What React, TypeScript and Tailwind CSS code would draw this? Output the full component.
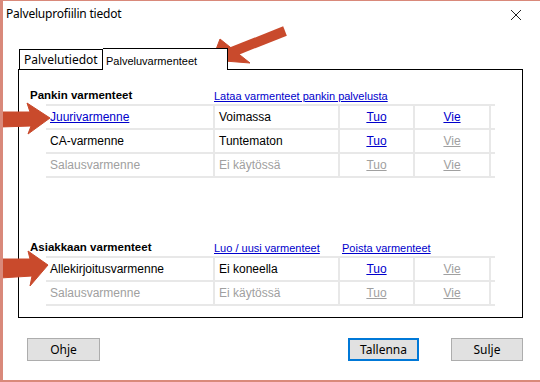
import React from 'react';

type Cell = { text: string; kind: 'link' | 'text' | 'muted' | 'mutedLink' };

interface CertRow {
  name: Cell;
  status: Cell;
  tuo: Cell;
  vie: Cell;
}

const bankRows: CertRow[] = [
  {
    name: { text: 'Juurivarmenne', kind: 'link' },
    status: { text: 'Voimassa', kind: 'text' },
    tuo: { text: 'Tuo', kind: 'link' },
    vie: { text: 'Vie', kind: 'link' },
  },
  {
    name: { text: 'CA-varmenne', kind: 'text' },
    status: { text: 'Tuntematon', kind: 'text' },
    tuo: { text: 'Tuo', kind: 'link' },
    vie: { text: 'Vie', kind: 'mutedLink' },
  },
  {
    name: { text: 'Salausvarmenne', kind: 'muted' },
    status: { text: 'Ei käytössä', kind: 'muted' },
    tuo: { text: 'Tuo', kind: 'mutedLink' },
    vie: { text: 'Vie', kind: 'mutedLink' },
  },
];

const customerRows: CertRow[] = [
  {
    name: { text: 'Allekirjoitusvarmenne', kind: 'text' },
    status: { text: 'Ei koneella', kind: 'text' },
    tuo: { text: 'Tuo', kind: 'link' },
    vie: { text: 'Vie', kind: 'mutedLink' },
  },
  {
    name: { text: 'Salausvarmenne', kind: 'muted' },
    status: { text: 'Ei käytössä', kind: 'muted' },
    tuo: { text: 'Tuo', kind: 'mutedLink' },
    vie: { text: 'Vie', kind: 'mutedLink' },
  },
];

const cellText = (c: Cell) => {
  if (c.kind === 'link') return <span className="text-[#0000cc] underline">{c.text}</span>;
  if (c.kind === 'mutedLink') return <span className="text-[#a0a0a0] underline">{c.text}</span>;
  if (c.kind === 'muted') return <span className="text-[#a0a0a0]">{c.text}</span>;
  return <span className="text-black">{c.text}</span>;
};

const CertTable: React.FC<{ rows: CertRow[] }> = ({ rows }) => (
  <div className="ml-[27px] w-[449px] border-b-2 border-[#e8e8e8]">
    {rows.map((r, i) => (
      <div key={i} className="flex h-[24px] border-t-2 border-[#e8e8e8] text-[12px]">
        <div className="w-[167px] pl-[4px] flex items-center">{cellText(r.name)}</div>
        <div className="w-[125px] pl-[4px] flex items-center border-l-2 border-[#e8e8e8]">{cellText(r.status)}</div>
        <div className="w-[75px] flex items-center justify-center border-l-2 border-[#e8e8e8]">{cellText(r.tuo)}</div>
        <div className="w-[78px] flex items-center justify-center border-x-2 border-[#e8e8e8]">{cellText(r.vie)}</div>
      </div>
    ))}
  </div>
);

const Button: React.FC<{ label: string; primary?: boolean; className?: string }> = ({ label, primary, className }) => (
  <button
    className={`h-[23px] bg-[#e1e1e1] text-[12px] text-black ${
      primary ? 'border-2 border-[#0078d7]' : 'border border-[#adadad]'
    } ${className ?? ''}`}
    style={{ fontFamily: '"Noto Sans", sans-serif' }}
  >
    {label}
  </button>
);

const App: React.FC = () => {
  return (
    <div
      className="relative w-[540px] h-[382px] bg-white border-l-[3px] border-t border-b-2 border-[#d9897a] overflow-hidden"
      style={{ fontFamily: '"Liberation Sans", Arial, sans-serif' }}
    >
      {/* title bar */}
      <div className="h-[25px] flex items-center justify-between pl-[3px] pr-[18px]">
        <span className="text-[12px] text-black" style={{ fontFamily: '"Noto Sans", sans-serif', letterSpacing: '-0.2px' }}>
          Palveluprofiilin tiedot
        </span>
        <svg width="12" height="12" viewBox="0 0 12 12" className="mt-[2px]">
          <path d="M1 1 L11 11 M11 1 L1 11" stroke="#222" strokeWidth="1" fill="none" />
        </svg>
      </div>

      {/* tabs */}
      <div className="mt-[21px] ml-[16px] flex items-end h-[22px]">
        <div
          className="h-[20px] w-[84px] border border-b-0 border-black flex items-center pl-[4px] text-[12px]"
          style={{ fontFamily: '"Noto Sans", sans-serif' }}
        >
          Palvelutiedot
        </div>
        <div className="relative z-10 h-[22px] -mb-px w-[125px] border border-l-0 border-b-0 border-black bg-white flex items-center pl-[3px] pt-[3px] text-[11px]">
          Palveluvarmenteet
        </div>
      </div>

      {/* panel */}
      <div className="ml-[15px] w-[505px] h-[249px] border border-black">
        <div className="mt-[19px] flex items-center h-[14px] text-[11px]">
          <span className="ml-[11px] w-[184px] font-bold text-[11.5px]">Pankin varmenteet</span>
          <span className="text-[#0000cc] underline">Lataa varmenteet pankin palvelusta</span>
        </div>
        <div className="mt-[1px]">
          <CertTable rows={bankRows} />
        </div>

        <div className="mt-[63px] flex items-center h-[14px] text-[11px]">
          <span className="ml-[11px] w-[184px] font-bold text-[11.5px]">Asiakkaan varmenteet</span>
          <span className="w-[128px] text-[#0000cc] underline">Luo / uusi varmenteet</span>
          <span className="text-[#0000cc] underline">Poista varmenteet</span>
        </div>
        <div className="mt-[1px]">
          <CertTable rows={customerRows} />
        </div>
      </div>

      {/* buttons */}
      <div className="mt-[20px] flex items-center">
        <Button label="Ohje" className="ml-[24px] w-[73px]" />
        <Button label="Tallenna" primary className="ml-[248px] w-[71px]" />
        <Button label="Sulje" className="ml-[32px] w-[72px]" />
      </div>

      {/* annotation arrows */}
      <svg className="absolute left-[-3px] top-[-1px] pointer-events-none" width="540" height="382" viewBox="0 0 540 382">
        <g fill="#c94a2c" stroke="#c94a2c">
          <line x1="285" y1="31" x2="232" y2="52" strokeWidth="10" />
          <polygon points="212,60 220,39 250,63" strokeWidth="1" strokeLinejoin="round" />
          <polygon points="0,112 30,112 27,103 50,118 28,134 31,126 0,127" strokeWidth="1" strokeLinejoin="round" />
          <polygon points="0,259 30,259 28,251 48,265 30,286 32,276 0,278" strokeWidth="1" strokeLinejoin="round" />
        </g>
      </svg>
    </div>
  );
};

export default App;
